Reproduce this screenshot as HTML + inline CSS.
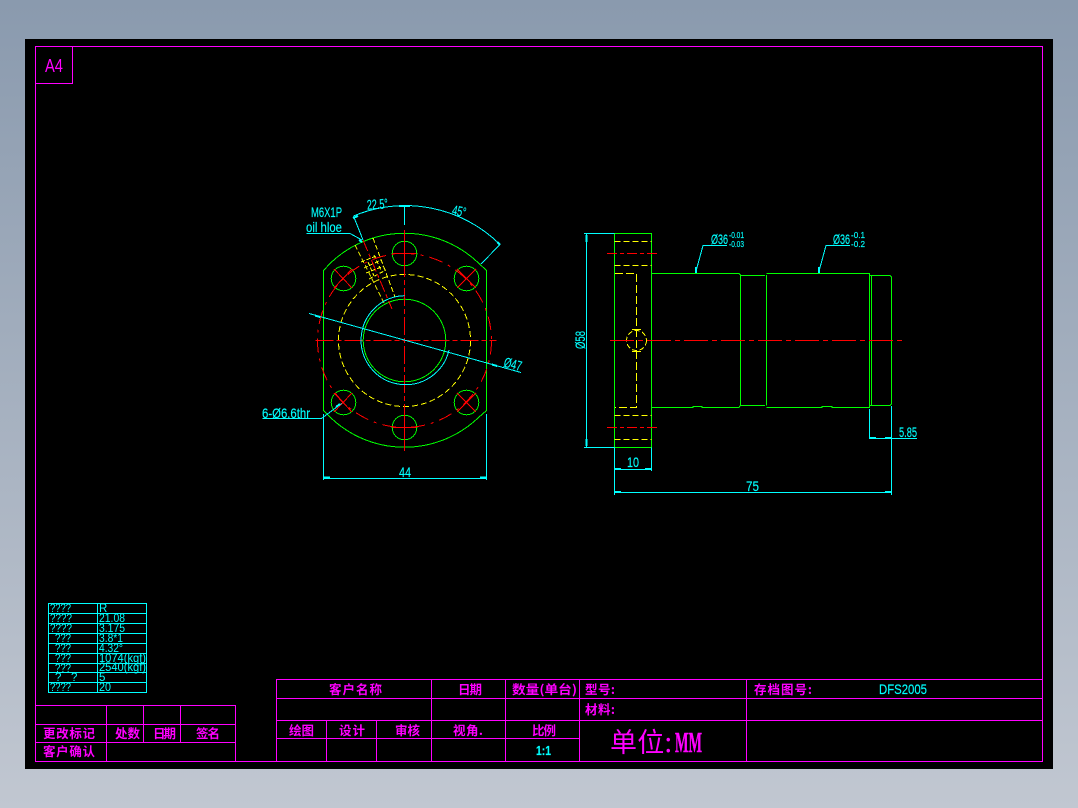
<!DOCTYPE html>
<html><head><meta charset="utf-8"><style>
html,body{margin:0;padding:0;width:1078px;height:808px;overflow:hidden;background:linear-gradient(#8a9aae,#c1c7d1)}
svg{position:absolute;left:0;top:0}
text{font-family:"Liberation Sans","Noto Sans CJK SC",sans-serif}
.m text{fill:#f0f;font-weight:700;font-family:"Noto Sans CJK SC","Liberation Sans",sans-serif;font-size:12.5px}
.c text{fill:#0ff;font-size:14px;stroke:#0ff;stroke-width:.15px}
.t text{fill:#0ff;font-size:11.5px}
</style></head><body>
<svg width="1078" height="808" viewBox="0 0 1078 808" xmlns="http://www.w3.org/2000/svg">
<rect x="25" y="39" width="1028" height="730" fill="#000"/>

<!-- magenta frame -->
<g fill="none" stroke="#f0f" stroke-width="1" shape-rendering="crispEdges">
<path d="M35.5 46.5H1042.5V761.5H35.5Z"/>
<path d="M35.5 83.5H72.5V46.5"/>
<path d="M35.5 705.5H235.5V761.5M35.5 724.5H235.5M35.5 742.5H235.5M106.5 705.5V761.5M143.5 705.5V742.5M180.5 705.5V742.5"/>
<path d="M276.5 761.5V679.5H1042.5M276.5 698.5H1042.5M276.5 720.5H1042.5M276.5 738.5H579.5M431.5 679.5V761.5M505.5 679.5V761.5M579.5 679.5V761.5M746.5 679.5V761.5M326.5 720.5V761.5M376.5 720.5V761.5"/>
</g>

<!-- cyan table -->
<g fill="none" stroke="#0ff" stroke-width="1" shape-rendering="crispEdges">
<path d="M48.5 603.5H146.5V692.5H48.5ZM97.5 603.5V692.5M48.5 613.5H146.5M48.5 623.5H146.5M48.5 633.5H146.5M48.5 643.5H146.5M48.5 653.5H146.5M48.5 663.5H146.5M48.5 672.5H146.5M48.5 682.5H146.5"/>
</g>

<!-- front view green -->
<g fill="none" stroke="#0f0" stroke-width="1" shape-rendering="crispEdges">
<path d="M323.5 270.5L330.5 263A107 107 0 0 1 478.5 263L486.5 270.5V410.5L478.5 417.5A107 107 0 0 1 330.5 417.5L323.5 410.5Z"/>
<circle cx="404.5" cy="340.5" r="41.3"/>
<circle cx="404.5" cy="253.5" r="12.3"/>
<circle cx="404.5" cy="427.5" r="12.3"/>
<circle cx="343.5" cy="278.5" r="12.3"/>
<circle cx="466.5" cy="278.5" r="12.3"/>
<circle cx="343.5" cy="402.5" r="12.3"/>
<circle cx="466.5" cy="402.5" r="12.3"/>
</g>
<!-- front view yellow -->
<g fill="none" stroke="#ff0" stroke-width="1" shape-rendering="crispEdges">
<circle cx="404.5" cy="340.5" r="66" stroke-dasharray="6 3"/>
<path d="M355 245L384 303M373 238L395 297" stroke-dasharray="5 2.5"/>
<path d="M361 262L376 256M364 268L381 260M366 273L384 266M369 279L386 270M374 255L381 270M368 262L374 276" stroke-dasharray="4 2"/>
</g>
<!-- front view red -->
<g fill="none" stroke="#f00" stroke-width="1" shape-rendering="crispEdges">
<circle cx="404.5" cy="340.5" r="87" stroke-dasharray="14 6 3 6"/>
<path d="M315.5 340.5H496.5M404.5 230V452" stroke-dasharray="18 3 5 3"/>
<path d="M392.5 253.5H416.5M404.5 242V265M392.5 427.5H416.5M404.5 416V439"/>
<path d="M334 269L352 288M334 288L352 269M457 269L476 288M457 288L476 269M334 393L352 412M334 412L352 393M457 393L476 412M457 412L476 393"/>
<path d="M363 240L392 309" stroke-dasharray="12 3 4 3"/>
</g>
<!-- front view cyan -->
<g fill="none" stroke="#0ff" stroke-width="1" shape-rendering="crispEdges">
<path d="M404.5 295.7A44.5 44.5 0 1 0 449 350"/>
<path d="M309 313.5L521 372.5"/>
<path d="M353.5 216A134.6 134.6 0 0 1 500 244.5L481 264"/>
<path d="M353.5 216L363 240"/>
<path d="M404.5 205V225"/>
<path d="M306.5 233.5H350L362 240"/>
<path d="M262.5 418.5H321.5L341.5 403.5"/>
<path d="M323.5 414V480M486.5 414V480M323.5 478.5H486.5"/>
</g>
<g stroke="#0ff" stroke-width="2" fill="none" shape-rendering="crispEdges">
<path d="M315 315.5L320 317M492 364.5L497 366M359 240L362 242M399 206H410M353 218L358 216M497 242L500 244.5M336 407L340 404"/>
<path d="M324 477.5H330M480 477.5H486"/>
</g>

<!-- side view green -->
<g fill="none" stroke="#0f0" stroke-width="1" shape-rendering="crispEdges">
<path d="M614.5 233.5H651.5V447.5H614.5Z"/>
<path d="M651.5 273.5H739L740.5 275V405L739 407.5H702V406.5H693V407.5H651.5"/>
<path d="M740.5 275.5H765M740.5 405.5H765M766.5 275V405.5"/>
<path d="M766.5 273.5H869.5V407.5H832V406.5H822V407.5H766.5"/>
<path d="M869.5 275.5H890L891.5 277V404L890 405.5H869.5M871.5 275.5V405.5"/>
</g>
<!-- side view yellow -->
<g fill="none" stroke="#ff0" stroke-width="1" shape-rendering="crispEdges">
<path d="M614.5 241.5H651.5M614.5 265.5H651.5M614.5 415.5H651.5M614.5 439.5H651.5" stroke-dasharray="6 3"/>
<path d="M615 273.5H636.5V407.5H615" stroke-dasharray="8 3"/>
<circle cx="636.5" cy="340.5" r="10" stroke-dasharray="5 2.5"/>
<path d="M632 329.5H641M632 351.5H641"/>
</g>
<!-- side view red -->
<g fill="none" stroke="#f00" stroke-width="1" shape-rendering="crispEdges">
<path d="M607 253.5H658M607 427.5H658" stroke-dasharray="10 3 4 3"/>
<path d="M610 340.5H902" stroke-dasharray="24 4 5 4"/>
</g>
<!-- side view cyan -->
<g fill="none" stroke="#0ff" stroke-width="1" shape-rendering="crispEdges">
<path d="M584 233.5H614.5M584 447.5H614.5M586.5 233.5V447.5"/>
<path d="M614.5 447.5V495M651.5 447.5V471M614.5 469.5H651.5"/>
<path d="M614.5 492.5H891.5M891.5 406V495"/>
<path d="M869.5 409V438.5H917"/>
<path d="M695.5 273L703 245.5H727M818.5 273L826 245.5H850"/>
</g>
<g stroke="#0ff" stroke-width="2" fill="none" shape-rendering="crispEdges">
<path d="M586.5 235V242M586.5 439V446M615 469H621M645 469H651M615 492H621M885 492H891M870 438H876M885 438H891M696 267V273M819 267V273"/>
</g>

<!-- dimension text -->
<g class="c">
<text x="311" y="217" textLength="31" lengthAdjust="spacingAndGlyphs">M6X1P</text>
<text x="306" y="232" textLength="36" lengthAdjust="spacingAndGlyphs">oil hloe</text>
<text x="367" y="209" textLength="21" lengthAdjust="spacingAndGlyphs" transform="rotate(-4 377 205)">22.5°</text>
<text x="452" y="216" textLength="14" lengthAdjust="spacingAndGlyphs" transform="rotate(12 459 212)">45°</text>
<text x="504" y="369" textLength="18" lengthAdjust="spacingAndGlyphs" transform="rotate(15 513 364)">Ø47</text>
<text x="262" y="418" textLength="48" lengthAdjust="spacingAndGlyphs">6-Ø6.6thr</text>
<text x="399" y="477" textLength="12" lengthAdjust="spacingAndGlyphs">44</text>
<text x="711" y="244" textLength="17" lengthAdjust="spacingAndGlyphs">Ø36</text>
<text x="833" y="244" textLength="17" lengthAdjust="spacingAndGlyphs">Ø36</text>
<text x="729" y="238" textLength="15" lengthAdjust="spacingAndGlyphs" style="font-size:8px">-0.01</text>
<text x="729" y="247" textLength="15" lengthAdjust="spacingAndGlyphs" style="font-size:8px">-0.03</text>
<text x="851" y="238" textLength="14" lengthAdjust="spacingAndGlyphs" style="font-size:8px">-0.1</text>
<text x="851" y="247" textLength="14" lengthAdjust="spacingAndGlyphs" style="font-size:8px">-0.2</text>
<text x="627" y="467" textLength="12" lengthAdjust="spacingAndGlyphs">10</text>
<text x="746" y="491" textLength="13" lengthAdjust="spacingAndGlyphs">75</text>
<text x="899" y="437" textLength="18" lengthAdjust="spacingAndGlyphs">5.85</text>
<text x="585" y="349" textLength="18" lengthAdjust="spacingAndGlyphs" transform="rotate(-90 585 349)">Ø58</text>
<text x="879" y="694" textLength="48" lengthAdjust="spacingAndGlyphs" style="font-size:14px">DFS2005</text>
<text x="536" y="755" textLength="15" lengthAdjust="spacingAndGlyphs" style="font-size:13px;font-weight:700">1:1</text>
</g>

<!-- parameter table text -->
<g class="t">
<text x="50" y="612" textLength="21" lengthAdjust="spacingAndGlyphs">????</text>
<text x="50" y="622" textLength="22" lengthAdjust="spacingAndGlyphs">????</text>
<text x="50" y="632" textLength="22" lengthAdjust="spacingAndGlyphs">????</text>
<text x="55" y="642" textLength="16" lengthAdjust="spacingAndGlyphs">???</text>
<text x="55" y="652" textLength="16" lengthAdjust="spacingAndGlyphs">???</text>
<text x="55" y="662" textLength="16" lengthAdjust="spacingAndGlyphs">???</text>
<text x="55" y="672" textLength="16" lengthAdjust="spacingAndGlyphs">???</text>
<text x="55" y="681">?</text>
<text x="71" y="681">?</text>
<text x="50" y="691" textLength="21" lengthAdjust="spacingAndGlyphs">????</text>
<text x="99" y="612">R</text>
<text x="99" y="622" textLength="26" lengthAdjust="spacingAndGlyphs">21.08</text>
<text x="99" y="632" textLength="26" lengthAdjust="spacingAndGlyphs">3.175</text>
<text x="99" y="642" textLength="24" lengthAdjust="spacingAndGlyphs">3.8*1</text>
<text x="99" y="652" textLength="24" lengthAdjust="spacingAndGlyphs">4.32°</text>
<text x="99" y="662" textLength="47" lengthAdjust="spacingAndGlyphs">1074(kgf)</text>
<text x="99" y="671" textLength="47" lengthAdjust="spacingAndGlyphs">2540(kgf)</text>
<text x="99" y="681">5</text>
<text x="99" y="691" textLength="12" lengthAdjust="spacingAndGlyphs">20</text>
</g>

<!-- magenta text -->
<text x="45" y="72" textLength="18" lengthAdjust="spacingAndGlyphs" fill="#f0f" style="font-size:18px">A4</text>
<g class="m">
<text x="329" y="694" textLength="53">客户名称</text>
<text x="458" y="694" textLength="24">日期</text>
<text x="512" y="694" textLength="65" lengthAdjust="spacingAndGlyphs">数量(单台)</text>
<text x="585" y="694" textLength="30">型号:</text>
<text x="585" y="714" textLength="30">材料:</text>
<text x="289" y="735" textLength="25">绘图</text>
<text x="339" y="735" textLength="26">设计</text>
<text x="395" y="735" textLength="25">审核</text>
<text x="453" y="735" textLength="30">视角.</text>
<text x="532" y="735" textLength="24">比例</text>
<text x="754" y="694" textLength="58">存档图号:</text>
<text x="43" y="738" textLength="52">更改标记</text>
<text x="115" y="738" textLength="25">处数</text>
<text x="153" y="738" textLength="23">日期</text>
<text x="196" y="738" textLength="24">签名</text>
<text x="43" y="756" textLength="52">客户确认</text>
<text x="610" y="752" textLength="62" style="font-size:27px;font-weight:400">单位:</text>
<text x="675" y="752" textLength="27" lengthAdjust="spacingAndGlyphs" style="font-family:'Liberation Serif',serif;font-size:29px;font-weight:700;stroke:#f0f;stroke-width:.5px">MM</text>
</g>
</svg>
</body></html>
